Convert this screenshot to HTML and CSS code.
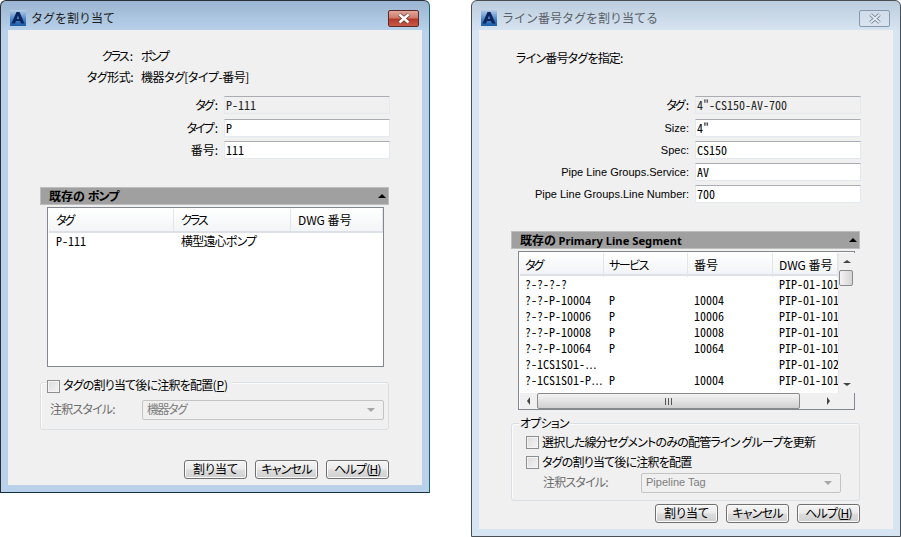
FILE: index.html
```html
<!DOCTYPE html>
<html lang="ja">
<head>
<meta charset="utf-8">
<title>タグを割り当て</title>
<link rel="stylesheet" href="styles.css">
</head>
<body>
<svg class="defs" width="0" height="0" aria-hidden="true">
  <defs>
    <linearGradient id="logo-bg" x1="0" y1="0" x2="0" y2="1">
      <stop offset="0" stop-color="#b7cfe6"/>
      <stop offset="0.55" stop-color="#4f88c4"/>
      <stop offset="1" stop-color="#1a5aa6"/>
    </linearGradient>
    <symbol id="logo" viewBox="0 0 16 16">
      <rect width="16" height="16" fill="url(#logo-bg)"/>
      <path d="M6.5 2 H9.5 L14.5 13.5 H11 L10 11 H6 L5 13.5 H1.5 Z M8 5.5 L6.8 9 H9.2 Z" fill="#0a2560" fill-rule="evenodd"/>
    </symbol>
  </defs>
</svg>

<section class="window window-active win-left">
  <header class="titlebar">
    <svg class="logo"><use href="#logo"/></svg>
    <span class="title">タグを割り当て</span>
    <span class="close close-red">
      <svg width="14" height="11" viewBox="0 0 14 11"><path d="M2.5 1.5 L11.5 9.5 M11.5 1.5 L2.5 9.5" stroke="#6d3a36" stroke-width="4"/><path d="M2.5 1.5 L11.5 9.5 M11.5 1.5 L2.5 9.5" stroke="#fff" stroke-width="2.4"/></svg>
    </span>
  </header>
  <main class="client">
    <div class="info">
      <span class="info-label"><span class="t2">クラス</span>:</span><span class="t2">ポンプ</span>
      <span class="info-label t05">タグ形式:</span><span class="t05">機器タグ[タイプ-番号]</span>
    </div>
    <div class="fields fields-left">
      <label class="field field-ro"><span class="field-label"><span class="t2">タグ</span>:</span><input class="input input-ro" readonly value="P-111"></label>
      <label class="field"><span class="field-label"><span class="t2">タイプ</span>:</span><input class="input" value="P"></label>
      <label class="field"><span class="field-label">番号:</span><input class="input" value="111"></label>
    </div>
    <div class="section-head"><span>既存の <span class="t1">ポンプ</span></span><i class="tri-up"></i></div>
    <div class="list list-left">
      <div class="list-row list-header cols-left"><span class="t2">タグ</span><span class="t2">クラス</span><span>DWG 番号</span></div>
      <div class="list-row cols-left"><span class="mono">P-111</span><span class="t1">横型遠心ポンプ</span><span></span></div>
    </div>
    <fieldset class="group group-left">
      <label class="legend legend-left"><i class="checkbox"></i><span><span class="t1">タグの割り当て後に注釈を配置</span>(<u>P</u>)</span></label>
      <div class="combo-row">
        <span class="combo-label combo-label-left t1">注釈スタイル:</span>
        <div class="combo combo-left"><span class="t15">機器タグ</span><i class="tri-down"></i></div>
      </div>
    </fieldset>
    <div class="buttons buttons-left">
      <button class="btn">割り当て</button>
      <button class="btn t1">キャンセル</button>
      <button class="btn t1">ヘルプ(<u>H</u>)</button>
    </div>
  </main>
</section>

<section class="window window-inactive win-right">
  <header class="titlebar">
    <svg class="logo"><use href="#logo"/></svg>
    <span class="title">ライン番号タグを割り当てる</span>
    <span class="close close-off">
      <svg width="14" height="11" viewBox="0 0 14 11"><path d="M2.5 1.5 L11.5 9.5 M11.5 1.5 L2.5 9.5" stroke="#6f7a86" stroke-width="3.6"/><path d="M2.5 1.5 L11.5 9.5 M11.5 1.5 L2.5 9.5" stroke="#e2e8ef" stroke-width="2"/></svg>
    </span>
  </header>
  <main class="client">
    <p class="intro t1">ライン番号タグを指定:</p>
    <div class="fields fields-right">
      <label class="field field-ro"><span class="field-label"><span class="t2">タグ</span>:</span><input class="input input-ro" readonly value="4&quot;-CS150-AV-700"></label>
      <label class="field"><span class="field-label latin">Size:</span><input class="input" value="4&quot;"></label>
      <label class="field"><span class="field-label latin">Spec:</span><input class="input" value="CS150"></label>
      <label class="field"><span class="field-label latin">Pipe Line Groups.Service:</span><input class="input" value="AV"></label>
      <label class="field"><span class="field-label latin">Pipe Line Groups.Line Number:</span><input class="input" value="700"></label>
    </div>
    <div class="section-head"><span>既存の <b class="latin-bold">Primary Line Segment</b></span><i class="tri-up"></i></div>
    <div class="list list-right">
      <div class="list-main">
        <div class="list-table">
          <div class="list-row list-header cols-right"><span class="t2">タグ</span><span class="t15">サービス</span><span>番号</span><span>DWG 番号</span></div>
          <div class="list-row cols-right mono"><span>?-?-?-?</span><span></span><span></span><span>PIP-01-101</span></div>
          <div class="list-row cols-right mono"><span>?-?-P-10004</span><span>P</span><span>10004</span><span>PIP-01-101</span></div>
          <div class="list-row cols-right mono"><span>?-?-P-10006</span><span>P</span><span>10006</span><span>PIP-01-101</span></div>
          <div class="list-row cols-right mono"><span>?-?-P-10008</span><span>P</span><span>10008</span><span>PIP-01-101</span></div>
          <div class="list-row cols-right mono"><span>?-?-P-10064</span><span>P</span><span>10064</span><span>PIP-01-101</span></div>
          <div class="list-row cols-right mono"><span>?-1CS1S01-<i class="dots">…</i></span><span></span><span></span><span>PIP-01-102</span></div>
          <div class="list-row cols-right mono"><span>?-1CS1S01-P<i class="dots">…</i></span><span>P</span><span>10004</span><span>PIP-01-101</span></div>
        </div>
        <div class="vscroll">
          <span class="sb-btn"><i class="sb-up"></i></span>
          <span class="vthumb"></span>
          <span class="vspace"></span>
          <span class="sb-btn"><i class="sb-down"></i></span>
        </div>
      </div>
      <div class="hscroll">
        <span class="sb-btn sb-btn-h"><i class="sb-left"></i></span>
        <span class="hthumb"><i class="grip"></i></span>
        <span class="vspace"></span>
        <span class="sb-btn sb-btn-h"><i class="sb-right"></i></span>
        <span class="corner"></span>
      </div>
    </div>
    <fieldset class="group group-right">
      <span class="legend legend-right t1">オプション</span>
      <label class="check-row"><i class="checkbox"></i><span class="t1">選択した線分セグメントのみの配管ライン グループを更新</span></label>
      <label class="check-row"><i class="checkbox"></i><span class="t1">タグの割り当て後に注釈を配置</span></label>
      <div class="combo-row">
        <span class="combo-label combo-label-right t1">注釈スタイル:</span>
        <div class="combo combo-right"><span class="latin">Pipeline Tag</span><i class="tri-down"></i></div>
      </div>
    </fieldset>
    <div class="buttons buttons-right">
      <button class="btn">割り当て</button>
      <button class="btn t1">キャンセル</button>
      <button class="btn t1">ヘルプ(<u>H</u>)</button>
    </div>
  </main>
</section>
</body>
</html>
```

FILE: styles.css
```css
* { box-sizing: border-box; }

html, body {
  margin: 0;
  height: 100%;
  background: #fff;
  overflow: hidden;
}

body {
  position: relative;
  font: 12px/16px "Noto Sans CJK JP", "Liberation Sans", sans-serif;
  font-feature-settings: "palt";
  color: #000;
}

.defs { position: absolute; }

.latin { font-family: "Liberation Sans", sans-serif; font-size: 11px; }
.t05 { letter-spacing: -0.5px; }
.t1 { letter-spacing: -0.8px; }
.t15 { letter-spacing: -1.5px; }
.t2 { letter-spacing: -2px; }
.field-label .t2, .info-label .t2 { margin-right: 2px; }

/* windows on the desktop */
.window {
  position: absolute;
  top: 0;
  width: 430px;
  display: flex;
  flex-direction: column;
  padding: 0 7px 7px;
  border: 1px solid #2a3036;
  border-radius: 6px 6px 0 0;
}
.win-left { left: 0; height: 493px; }
.win-right { left: 471px; height: 537px; }

.window-active {
  background: linear-gradient(#9ab5d2 0, #b9d1ea 30px, #b9d1ea 100%);
  border-right-color: #1c5f70;
  border-bottom-color: #14303a;
}
.window-inactive {
  background: linear-gradient(#bccddd 0, #d7e4f2 30px, #d7e4f2 100%);
  border-color: #4a4f55;
}

.titlebar {
  flex: none;
  height: 29px;
  display: flex;
  align-items: center;
  margin: 0 -7px;
  padding: 5px 10px 0 9px;
}
.logo { width: 16px; height: 16px; flex: none; }
.title {
  margin-left: 5px;
  flex: 1;
  color: #1c1c1c;
  line-height: 18px;
  font-feature-settings: normal;
}
.window-inactive .title { color: #5a6068; }

.close {
  width: 31px;
  height: 17px;
  display: flex;
  align-items: center;
  justify-content: center;
  border-radius: 2px;
}
.close-red {
  border: 1px solid #5b2a28;
  background: linear-gradient(#dfa89c 0, #d07a6a 45%, #b5392a 55%, #c85a48 100%);
}
.close-off {
  border: 1px solid #8698ab;
  background: linear-gradient(#d0dcea, #d9e4f0);
}

.client {
  flex: 1;
  background: #f0f0f0;
}
.win-left .client { padding-top: 16px; }

/* header info */
.info {
  display: grid;
  grid-template-columns: 125px 1fr;
  grid-auto-rows: 21px;
  column-gap: 8px;
  align-items: center;
  height: 42px;
}
.info > span { margin-bottom: 2px; }
.info-label { text-align: right; }

.intro { margin: 20px 0 0 37px; height: 16px; }

/* form fields */
.fields { display: flex; flex-direction: column; gap: 4px; }
.fields-left { margin-top: 8px; }
.fields-right { margin-top: 30px; }

.field { display: flex; align-items: center; height: 18px; }
.field-ro { margin-bottom: 1px; }
.field-label {
  width: 210px;
  margin: 0 6px 0 0;
  text-align: right;
  white-space: nowrap;
}

.input {
  width: 166px;
  height: 18px;
  padding: 0 1px 2px;
  margin: 0;
  font: inherit;
  font-feature-settings: "hwid";
  color: #000;
  background: #fff;
  border: 1px solid #e3e9ef;
  border-top-color: #abadb3;
  border-radius: 0;
  outline: none;
}
.input-ro { background: #f0f0f0; color: #222; }

/* section header */
.section-head {
  width: 349px;
  height: 18px;
  margin: 28px 0 0 32px;
  padding: 0 2px 0 8px;
  display: flex;
  align-items: center;
  justify-content: space-between;
  background: #a0a0a0;
  border: 1px solid #bdbdbd;
  font-weight: 700;
  white-space: nowrap;
}
.latin-bold { font: 700 11.2px/16px "Noto Sans", sans-serif; }
.tri-up {
  width: 0;
  height: 0;
  border: 4px solid transparent;
  border-top: 0;
  border-bottom: 4px solid #000;
}

/* lists */
.list {
  width: 337px;
  margin: 2px 0 0 39px;
  padding: 1px 0 0 1px;
  border: 1px solid #828790;
  background: #fff;
}
.list-left { height: 160px; }
.list-right { height: 159px; display: flex; flex-direction: column; }

.list-row { display: grid; height: 16px; line-height: 14px; white-space: nowrap; }
.list-row > span { padding-left: 7px; }
.list-header {
  height: 24px;
  margin-bottom: 1px;
  align-items: stretch;
  line-height: 22px;
  background: linear-gradient(#fff, #f2f4f7);
  border-bottom: 2px solid #dde1e5;
}
.list-header > span { border-right: 1px solid #e3e5e8; }
.cols-left { grid-template-columns: 125px 117px 1fr; }
.cols-right { grid-template-columns: 84px 84px 85px 65px; }
.list-right .list-row > span { padding-left: 5px; }
.list-right .list-row > span:nth-child(3),
.list-right .list-row > span:last-child { padding-left: 6px; }
.list-right .list-header { height: 23px; margin-bottom: 1px; line-height: 24px; }
.mono { font-feature-settings: "hwid"; }
.dots { font: 12px/14px "Liberation Sans", sans-serif; font-feature-settings: normal; }

.list-main { flex: 1; display: flex; min-height: 0; }
.list-table { width: 318px; flex: none; }

.vscroll {
  width: 17px;
  display: flex;
  flex-direction: column;
  background: #f0f0f0;
  border-left: 1px solid #e8e8e8;
}
.sb-btn { flex: none; width: 16px; height: 17px; display: flex; align-items: center; justify-content: center; }
.sb-btn-h { width: 17px; height: 16px; }
.vspace { flex: 1; }
.vthumb {
  flex: none;
  height: 16px;
  width: 14px;
  border: 1px solid #8a8a8a;
  border-radius: 2px;
  background: linear-gradient(90deg, #f4f4f4, #d4d4d4);
}
.sb-up, .sb-down, .sb-left, .sb-right { width: 0; height: 0; border-style: solid; border-color: transparent; }
.sb-up { border-width: 0 4px 3px; border-bottom-color: #444; }
.sb-down { border-width: 3px 4px 0; border-top-color: #444; }
.sb-left { border-width: 4px 3px 4px 0; border-right-color: #444; }
.sb-right { border-width: 4px 0 4px 3px; border-left-color: #444; }

.hscroll {
  flex: none;
  height: 16px;
  display: flex;
  background: #f0f0f0;
}
.hthumb {
  flex: none;
  width: 263px;
  display: flex;
  align-items: center;
  justify-content: center;
  border: 1px solid #8a8a8a;
  border-radius: 2px;
  background: linear-gradient(#f4f4f4, #d0d0d0);
}
.grip {
  width: 8px;
  height: 7px;
  background: repeating-linear-gradient(90deg, #555 0 1px, transparent 1px 3px);
}
.corner { flex: none; width: 17px; background: #f0f0f0; }

/* group boxes */
.group {
  position: relative;
  width: 349px;
  margin: 0 0 0 32px;
  padding: 0;
  min-width: 0;
  border: 1px solid #dadfe3;
  border-radius: 3px;
  box-shadow: inset 1px 1px 0 #fbfbfb;
}
.group-left { height: 48px; margin-top: 15px; padding-top: 17px; }
.group-right { height: 78px; margin-top: 13px; padding-top: 12px; }

.legend {
  position: absolute;
  display: flex;
  align-items: center;
  background: #f0f0f0;
  white-space: nowrap;
}
.legend > span { margin-bottom: 2px; }
.legend-left { left: 6px; top: -4px; height: 14px; padding-right: 4px; }
.legend-right { left: 7px; top: -9px; height: 16px; padding: 0 1px; }

.checkbox {
  flex: none;
  width: 13px;
  height: 13px;
  margin-right: 3px;
  border: 1px solid #8e8f8f;
  background: linear-gradient(135deg, #dcdcdc, #f4f4f4);
  box-shadow: inset 0 0 0 1px #f4f4f4;
}

.check-row {
  display: flex;
  align-items: center;
  height: 13px;
  margin: 0 0 7px 14px;
  white-space: nowrap;
}
.check-row > span { margin-bottom: 2px; }
.check-row + .combo-row { margin-top: -3px; }

.combo-row { display: flex; align-items: center; height: 20px; }
.combo-label { flex: none; color: #6d6d6d; white-space: nowrap; margin-bottom: 2px; }
.combo-label-left { width: 101px; padding-left: 9px; }
.combo-label-right { width: 129px; padding-left: 31px; }

.combo {
  height: 20px;
  padding: 0 8px 2px 4px;
  display: flex;
  align-items: center;
  justify-content: space-between;
  color: #7d7d7d;
  background: #f0f0f0;
  border: 1px solid #c4c4c4;
  border-radius: 2px;
}
.combo-left { width: 242px; }
.combo-right { width: 200px; }
.tri-down {
  width: 0;
  height: 0;
  margin-top: 2px;
  border: 4px solid transparent;
  border-bottom: 0;
  border-top: 4px solid #a6a6a6;
}

/* buttons */
.buttons {
  width: 349px;
  margin-left: 32px;
  display: flex;
  justify-content: flex-end;
  gap: 8px;
}
.buttons-left { margin-top: 30px; }
.buttons-right { margin-top: 3px; }

.btn {
  width: 63px;
  height: 19px;
  padding: 0 0 2px;
  font: inherit;
  font-feature-settings: inherit;
  line-height: 14px;
  color: #000;
  border: 1px solid #707070;
  border-radius: 3px;
  background: linear-gradient(#f4f4f4 0, #ebebeb 48%, #dddddd 52%, #cfcfcf 100%);
  box-shadow: inset 0 0 0 1px #fbfbfb;
}
```
